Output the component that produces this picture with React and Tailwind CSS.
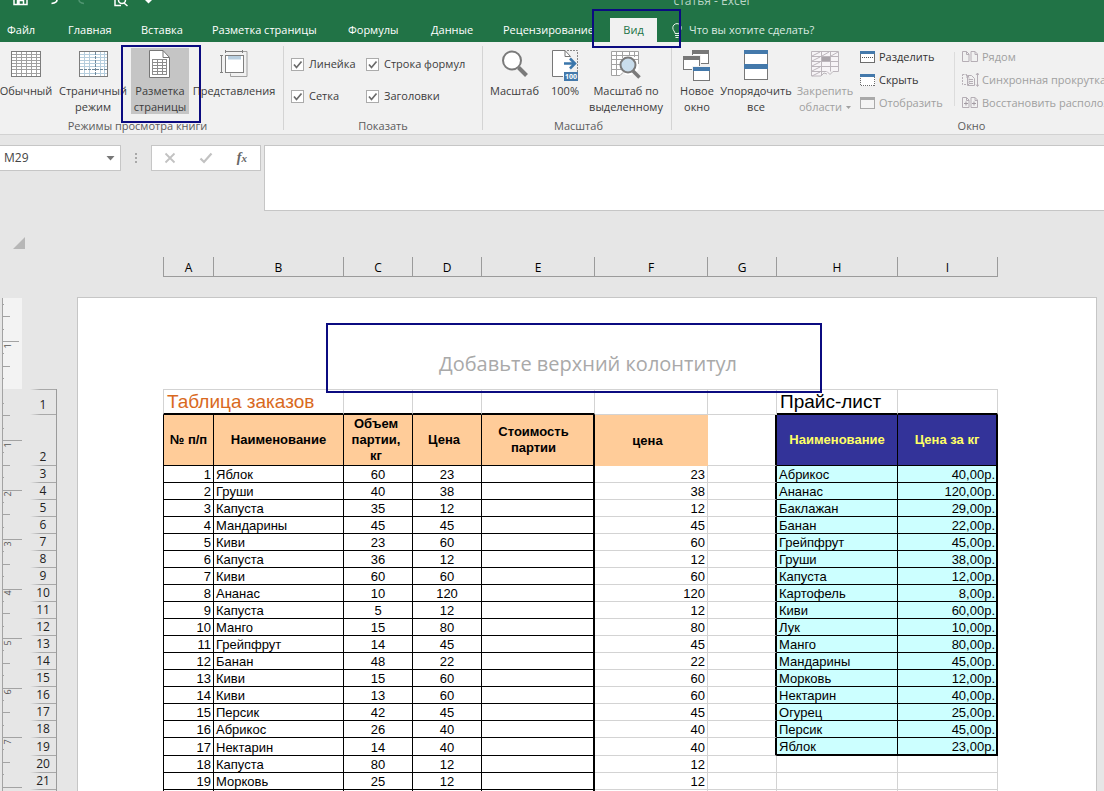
import React from "react";

const ORDERS = [
  ["Яблок", 60, 23], ["Груши", 40, 38], ["Капуста", 35, 12], ["Мандарины", 45, 45],
  ["Киви", 23, 60], ["Капуста", 36, 12], ["Киви", 60, 60], ["Ананас", 10, 120],
  ["Капуста", 5, 12], ["Манго", 15, 80], ["Грейпфрут", 14, 45], ["Банан", 48, 22],
  ["Киви", 15, 60], ["Киви", 13, 60], ["Персик", 42, 45], ["Абрикос", 26, 40],
  ["Нектарин", 14, 40], ["Капуста", 80, 12], ["Морковь", 25, 12],
];

const PRICES = [
  ["Абрикос", "40,00р."], ["Ананас", "120,00р."], ["Баклажан", "29,00р."], ["Банан", "22,00р."],
  ["Грейпфрут", "45,00р."], ["Груши", "38,00р."], ["Капуста", "12,00р."], ["Картофель", "8,00р."],
  ["Киви", "60,00р."], ["Лук", "10,00р."], ["Манго", "80,00р."], ["Мандарины", "45,00р."],
  ["Морковь", "12,00р."], ["Нектарин", "40,00р."], ["Огурец", "25,00р."], ["Персик", "45,00р."],
  ["Яблок", "23,00р."],
];

const COLUMNS = [
  ["A", "w-[51px]"], ["B", "w-[130px]"], ["C", "w-[69px]"], ["D", "w-[69px]"], ["E", "w-[113px]"],
  ["F", "w-[113px]"], ["G", "w-[69px]"], ["H", "w-[121px]"], ["I", "w-[100px]"],
];

const range = (n) => Array.from({ length: n }, (_, i) => i);

/* ---------- icons ---------- */

function NormalIcon() {
  return (
    <svg width="30" height="26" viewBox="0 0 30 26" fill="none" shapeRendering="crispEdges">
      <rect x="0.5" y="0.5" width="29" height="25" fill="#fff" />
      <path stroke="#a0a0a0" d="M5.5 1v24M10.500 1v24M15.500 1v24M20.500 1v24M25.500 1v24M1 3.500h28M1 6.500h28M1 9.500h28M1 12.500h28M1 15.500h28M1 18.500h28M1 22.500h28" />
      <rect x="0.500" y="0.500" width="29" height="25" stroke="#7d7d7d" />
    </svg>
  );
}

function PageBreakIcon() {
  return (
    <svg width="29" height="26" viewBox="0 0 29 26" fill="none" shapeRendering="crispEdges">
      <rect x="0.5" y="0.5" width="28" height="25" fill="#fff" />
      <path stroke="#b5cddd" d="M5.500 1v24M10.500 1v24M21.500 1v24M25.500 1v24M1 3.500h27M1 6.500h27M1 9.500h27M1 12.500h27M1 15.500h27M1 22.500h27" />
      <path stroke="#6f8799" strokeDasharray="3 1" d="M16.500 1v24M1 18.500h27" />
      <rect x="0.500" y="0.500" width="28" height="25" stroke="#7d7d7d" />
    </svg>
  );
}

function PageLayoutIcon() {
  return (
    <svg width="22" height="28" viewBox="0 0 22 28" fill="none">
      <path d="M.5.5H14L20.500 7.500V27.500H.5z" fill="#fff" stroke="#777" />
      <path d="M14 .5V7.500H20.500" stroke="#777" />
      <g shapeRendering="crispEdges" stroke="#8c8c8c">
        <rect x="3.500" y="9.500" width="14" height="15" />
        <path d="M8.500 9v15M13.500 9v15M3 12.500h15M3 15.500h15M3 18.500h15M3 21.500h15" />
      </g>
    </svg>
  );
}

function CustomViewsIcon() {
  return (
    <svg width="28" height="28" viewBox="0 0 28 28" fill="none" stroke="#808080">
      <path d="M10.500 23.500v3h16.500v-25h-4" stroke="#a0a0a0" />
      <rect x="5.500" y="5.500" width="18" height="17" fill="#fff" />
      <path d="M8 6h13v3.500H8z" fill="#b9cfe0" stroke="none" />
      <path d="M5 1.500h18M5.500 0v3M22.500 0v3M1.500 5v17M0 5.500h3M0 22.500h3" />
    </svg>
  );
}

function ZoomIcon() {
  return (
    <svg width="28" height="28" viewBox="0 0 28 28" fill="none">
      <path d="M17.500 17.500L25.500 25.500" stroke="#7a7a7a" strokeWidth="4" />
      <circle cx="11" cy="10.500" r="9" fill="#fff" stroke="#7a7a7a" strokeWidth="2" />
    </svg>
  );
}

function Zoom100Icon() {
  return (
    <svg width="28" height="31" viewBox="0 0 28 31" fill="none">
      <path d="M1.500 .5H14L18.500 5.500V26.500H1.500z" fill="#fff" />
      <path d="M12 26.500H1.500V.5H14L19.500 6.500M14 .5V6.500H19.500" stroke="#777" />
      <path d="M16 .5H26.500V22" stroke="#888" strokeDasharray="2 1" />
      <path d="M13 13.500h11M19 8.500l5 5l-5 5" stroke="#3a76ab" strokeWidth="2.500" />
      <rect x="13" y="22" width="14" height="9" fill="#4479ab" />
      <text x="20" y="29" fill="#fff" fontSize="7" fontWeight="700" textAnchor="middle" fontFamily="Open Sans, sans-serif">100</text>
    </svg>
  );
}

function ZoomSelectionIcon() {
  return (
    <svg width="30" height="29" viewBox="0 0 30 29" fill="none">
      <path d="M.5 1.500H27.500V20L20 25H15L12 22L9 25.500H.5z" fill="#fff" />
      <path d="M27.500 14V1.500H.5V25.500H9l3-3M.5 5.500h27M.5 9.500h27M.5 14.500h10M.5 19.500h10M5.500 1.500v24M11.500 1.500V8M18.500 1.500V6M23.500 1.500V7" stroke="#a2a2a2" />
      <path d="M22 21l6.500 6.500" stroke="#7a7a7a" strokeWidth="3.500" />
      <circle cx="17" cy="15" r="7.500" fill="#c9ddec" stroke="#7a7a7a" strokeWidth="2" />
    </svg>
  );
}

function NewWindowIcon() {
  return (
    <svg width="28" height="32" viewBox="0 0 28 32" fill="none" shapeRendering="crispEdges">
      <path d="M9.500 .5h16v13h-16z" fill="#fff" stroke="#777" />
      <path d="M9 0h17v4H9z" fill="#777" />
      <path d="M0 5h18v16H0z" fill="#f1f1f1" />
      <path d="M.5 6.500h16v13H.5z" fill="#fff" stroke="#777" />
      <path d="M0 6h17v4H0z" fill="#777" />
      <path d="M9 16h19v16H9z" fill="#f1f1f1" />
      <path d="M10.500 17.500h16v13h-16z" fill="#fff" stroke="#777" />
      <path d="M10 17h17v4H10z" fill="#4479ab" />
    </svg>
  );
}

function ArrangeIcon() {
  return (
    <svg width="24" height="30" viewBox="0 0 24 30" fill="none" shapeRendering="crispEdges">
      <path d="M.5 .5h23v29H.5z" fill="#fff" stroke="#777" />
      <path d="M0 0h24v4H0zM0 14h24v5H0z" fill="#4479ab" />
    </svg>
  );
}

function FreezeIcon() {
  return (
    <svg width="29" height="26" viewBox="0 0 29 26" fill="none" stroke="#bcb6bc">
      <path d="M.5 .5H27.500V20L20 20L17 24L12 20L9 25H.5z" fill="#f7f4f7" stroke="none" />
      <path d="M10 25H.5V.5H27.500V20.500H22l-3 3-3-3M10 25l3-3 3 1M.5 5.500h27M.5 10.500h27M.5 15.500h27M.5 20.500h15M10.500 .5v24M19.500 .5v20M1 5l8-4M11 5l7-4M20 5l7-4M1 10l8-4M1 15l8-4M1 20l8-4M1 25l8-4" />
      <path d="M11 6h8v4h-8z" fill="#aaa4aa" stroke="none" />
    </svg>
  );
}

function WindowIcon({ kind }) {
  const bar = kind === "show" ? "#a9a9a9" : "#4479ab";
  const edge = kind === "show" ? "#a9a9a9" : "#6d6d6d";
  return (
    <svg width="16" height="14" viewBox="0 0 16 14" fill="none" shapeRendering="crispEdges">
      <path d="M.5 1.500h14v11H.5z" fill={kind === "show" ? "#f4f4f4" : "#fff"} stroke={edge} strokeDasharray={kind === "hide" ? "1 1" : undefined} />
      <path d="M0 1h15v3H0z" fill={bar} />
      {kind === "split" && <path d="M2 7.500h12" stroke="#555" strokeDasharray="1 1" />}
    </svg>
  );
}

function PairIcon({ kind }) {
  return (
    <svg width="17" height="14" viewBox="0 0 17 14" fill="none" stroke="#b5aeb5">
      <path d="M.5 1.500h4l2.500 2.500v7.500H.5zM4.500 1.500V4.500H7" strokeDasharray={kind === "sync" ? "2 1" : undefined} />
      {kind === "sync" ? (
        <path d="M5.500 2.500h4l3 3v7h-7zM7 6.500h4M7 8.500h4M7 10.500h4M15.500 0v13M14 2l1.500-2L17 2M14 11.500l1.500 2 1.500-2" />
      ) : (
        <path d="M9 1.500h4l2.500 2.500v7.500H9zM13 1.500V4.500h2.500" />
      )}
      {kind === "reset" && <path d="M2 7.500h4M4 5.500v4M10 7.500h4M12 5.500v4" stroke="#a39ba3" />}
    </svg>
  );
}

/* ---------- ribbon ---------- */

function Callout({ className }) {
  return <span aria-hidden="true" className={`pointer-events-none absolute z-10 border-2 border-[#0b0b80] ${className}`} />;
}

function BigButton({ icon, lines, width, active, disabled, dropdown, children }) {
  return (
    <button
      disabled={disabled}
      className={`relative flex h-[66px] shrink-0 flex-col items-center whitespace-nowrap leading-4 ${width} ${active ? "bg-[#c5c5c5]" : ""} ${disabled ? "text-[#a0a0a0]" : "text-[#3c3c3c]"}`}
    >
      <span className="flex h-[35px] shrink-0 items-start pt-[2px]">{icon}</span>
      {lines.map((line, i) => (
        <span key={line} className="flex items-center gap-1">
          {line}
          {dropdown && i === lines.length - 1 && (
            <svg width="5" height="3" viewBox="0 0 5 3"><path d="M0 0h5L2.500 3z" fill="#a0a0a0" /></svg>
          )}
        </span>
      ))}
      {children}
    </button>
  );
}

function Group({ title, className, titleClass = "", children }) {
  return (
    <section className={`relative flex shrink-0 flex-col pt-[6px] ${className}`}>
      <div className="flex h-[70px]">{children}</div>
      <h2 className={`text-center leading-4 text-[#5c5c5c] ${titleClass}`}>{title}</h2>
    </section>
  );
}

function Divider() {
  return <div className="my-1 w-px shrink-0 bg-[#d4d4d4]" />;
}

function Check({ label }) {
  return (
    <label className="flex items-center gap-[5px] whitespace-nowrap leading-4 text-[#3c3c3c]">
      <span className="relative h-[13px] w-[13px] shrink-0">
        <input type="checkbox" defaultChecked className="peer block h-[13px] w-[13px] appearance-none border border-[#ababab] bg-white" />
        <svg className="pointer-events-none absolute inset-0 hidden peer-checked:block" width="13" height="13" viewBox="0 0 13 13" fill="none">
          <path d="M3 6.500l2.500 3L10.500 3.500" stroke="#6b6b6b" strokeWidth="1.700" />
        </svg>
      </span>
      {label}
    </label>
  );
}

function SmallButton({ icon, label, disabled }) {
  return (
    <button disabled={disabled} className={`flex h-[18px] items-center gap-[3px] whitespace-nowrap ${disabled ? "text-[#a0a0a0]" : "text-[#333]"}`}>
      {icon}
      {label}
    </button>
  );
}

function TitleBar() {
  return (
    <div className="relative flex h-[18px] items-start pl-[13px]">
      <button aria-label="Сохранить" className="w-9">
        <svg width="15" height="6" viewBox="0 0 15 6" fill="none"><path d="M1 0v4.500h13V0M4.500 4V.5h6V4M6 1v3" stroke="#fff" strokeWidth="1.500" /></svg>
      </button>
      <button aria-label="Отменить" className="w-[29px]">
        <svg width="10" height="6" viewBox="0 0 10 6" fill="none"><path d="M8 0c0 1.500-1.500 3-5.500 3.500" stroke="#fff" strokeWidth="1.700" /></svg>
      </button>
      <button aria-label="Вернуть" className="w-9">
        <svg width="10" height="6" viewBox="0 0 10 6" fill="none"><path d="M1 0c0 1.500 1.500 3 5 3.500" stroke="#4f9470" strokeWidth="1.500" /></svg>
      </button>
      <button aria-label="Просмотр" className="w-[31px]">
        <svg width="15" height="7" viewBox="0 0 15 7" fill="none" stroke="#fff"><path d="M1 0v5.500h6M10 3l3.500 3" strokeWidth="1.500" /><path d="M4.500 0a3.500 3.500 0 0 0 7 0" strokeWidth="1.500" /></svg>
      </button>
      <button aria-label="Настройка панели">
        <svg width="8" height="5" viewBox="0 0 8 5"><path d="M0 0h7L3.500 3.500z" fill="#fff" /></svg>
      </button>
      <p className="absolute -top-[7px] left-[61%] text-xs leading-4 text-[#b9d5c5]">статья - Excel</p>
    </div>
  );
}

const TABS = [
  ["Файл", "w-[54px] pl-[7px]"], ["Главная", "w-[73px]"], ["Вставка", "w-[71px]"],
  ["Разметка страницы", "w-[136px]"], ["Формулы", "w-[83px]"], ["Данные", "w-[72px]"],
  ["Рецензирование", "w-[121px]"],
];

function Tabs() {
  return (
    <nav className="flex h-6 items-stretch whitespace-nowrap text-white">
      {TABS.map(([label, cls]) => (
        <button key={label} className={`shrink-0 pt-px text-left ${cls} ${label === "Файл" ? "" : "pl-[14px]"}`}>{label}</button>
      ))}
      <button className="relative w-[47px] shrink-0 bg-[#f1f1f1] pt-px text-[#217346]">
        Вид
        <Callout className="-left-[18px] -top-[9px] h-[39px] w-[89px]" />
      </button>
      <button className="flex items-center gap-[7px] pl-[15px] pt-px text-[#dcebe2]">
        <svg width="10" height="16" viewBox="0 0 10 16" fill="none" stroke="#e8f2ec"><path d="M3 10.500C3 8.500.8 7.500.8 4.800a4.200 4.200 0 0 1 8.400 0C9.200 7.500 7 8.500 7 10.500zM3 12.500h4M3.500 14.500h3" /></svg>
        Что вы хотите сделать?
      </button>
    </nav>
  );
}

function Ribbon() {
  return (
    <div className="flex h-[93px] items-stretch border-b border-[#d2d2d2] bg-[#f1f1f1]">
      <Group title="Режимы просмотра книги" className="w-[283px]" titleClass="pr-2">
        <BigButton width="w-[52px]" icon={<span className="pt-[1px]"><NormalIcon /></span>} lines={["Обычный"]} />
        <BigButton width="ml-[3px] w-[76px]" icon={<span className="pt-[1px]"><PageBreakIcon /></span>} lines={["Страничный", "режим"]} />
        <BigButton width="w-[58px]" active icon={<PageLayoutIcon />} lines={["Разметка", "страницы"]}>
          <Callout className="-left-[10px] -top-[3px] h-[78px] w-20" />
        </BigButton>
        <BigButton width="w-[90px]" icon={<CustomViewsIcon />} lines={["Представления"]} />
      </Group>
      <Divider />
      <Group title="Показать" className="w-[198px]">
        <div className="grid grid-cols-[75px_1fr] grid-rows-[32px_32px] items-center pl-[7px]">
          <Check label="Линейка" />
          <Check label="Строка формул" />
          <Check label="Сетка" />
          <Check label="Заголовки" />
        </div>
      </Group>
      <Divider />
      <Group title="Масштаб" className="w-[188px] pl-[3px]">
        <BigButton width="w-[57px]" icon={<ZoomIcon />} lines={["Масштаб"]} />
        <BigButton width="w-[44px]" icon={<Zoom100Icon />} lines={["100%"]} />
        <BigButton width="w-[78px]" icon={<ZoomSelectionIcon />} lines={["Масштаб по", "выделенному"]} />
      </Group>
      <Divider />
      <Group title="Окно" className="w-[597px] pl-[2px]">
        <BigButton width="w-[46px]" icon={<NewWindowIcon />} lines={["Новое", "окно"]} />
        <BigButton width="w-[72px]" icon={<ArrangeIcon />} lines={["Упорядочить", "все"]} />
        <BigButton width="w-[66px]" disabled dropdown icon={<span className="pt-[1px]"><FreezeIcon /></span>} lines={["Закрепить", "области"]} />
        <div className="flex w-[96px] flex-col gap-[5px] pl-[2px]">
          <SmallButton icon={<WindowIcon kind="split" />} label="Разделить" />
          <SmallButton icon={<WindowIcon kind="hide" />} label="Скрыть" />
          <SmallButton disabled icon={<WindowIcon kind="show" />} label="Отобразить" />
        </div>
        <div className="mb-3 mt-1 w-px bg-[#dcdcdc]" />
        <div className="flex flex-col gap-[5px] pl-[7px]">
          <SmallButton disabled icon={<PairIcon kind="side" />} label="Рядом" />
          <SmallButton disabled icon={<PairIcon kind="sync" />} label="Синхронная прокрутка" />
          <SmallButton disabled icon={<PairIcon kind="reset" />} label="Восстановить расположение окна" />
        </div>
      </Group>
    </div>
  );
}

function FormulaBar() {
  return (
    <div className="flex items-start pt-[10px]">
      <div className="flex h-[26px] w-[121px] items-center border border-l-0 border-[#c6c6c6] bg-white">
        <input aria-label="Имя ячейки" defaultValue="M29" className="w-[106px] bg-transparent pl-1 text-[#444] outline-none" />
        <button aria-label="Список имён">
          <svg width="9" height="5" viewBox="0 0 9 5"><path d="M.5 0h8L4.500 4.500z" fill="#777" /></svg>
        </button>
      </div>
      <svg className="mx-[13px] mt-[7px] shrink-0" width="4" height="12" viewBox="0 0 4 12" fill="#a8a8a8"><path d="M1 1h2v2H1zM1 5h2v2H1zM1 9h2v2H1z" /></svg>
      <div className="flex h-[26px] w-[110px] shrink-0 items-center justify-between border border-[#c6c6c6] bg-white px-3">
        <button aria-label="Отмена">
          <svg width="12" height="12" viewBox="0 0 12 12"><path d="M1.500 1.500l9 9M10.500 1.500l-9 9" stroke="#c2c2c2" strokeWidth="1.800" /></svg>
        </button>
        <button aria-label="Ввод">
          <svg width="14" height="12" viewBox="0 0 14 12" fill="none"><path d="M1.500 6.500l3.500 3.500 7.500-8.500" stroke="#c2c2c2" strokeWidth="2.200" /></svg>
        </button>
        <button aria-label="Вставить функцию" className="flex items-baseline pr-px font-['Liberation_Serif',serif] text-sm font-bold italic leading-4 text-[#666]">
          f<span className="text-[11px]">x</span>
        </button>
      </div>
      <textarea aria-label="Строка формул" className="ml-[3px] block h-[66px] min-w-0 flex-1 resize-none border border-r-0 border-[#c6c6c6] bg-white outline-none" />
    </div>
  );
}

/* ---------- worksheet ---------- */

function ColumnHeaders() {
  return (
    <div className="relative flex h-[66px] items-end pl-[163px]">
      <button aria-label="Выделить всё" className="absolute left-[13px] top-[26px]">
        <svg width="12" height="12" viewBox="0 0 12 12"><path d="M12 0v12H0z" fill="#b7b7b7" /></svg>
      </button>
      {COLUMNS.map(([name, width], i) => (
        <div key={name} className={`h-5 shrink-0 border-b border-r border-[#9b9b9b] text-center leading-[21px] text-black ${width} ${i === 0 ? "border-l" : ""}`}>
          {name}
        </div>
      ))}
    </div>
  );
}

function Ruler() {
  const step = 49.5;
  const tick = (y, len) => <path key={`${y}-${len}`} d={`M2 ${Math.round(y) + 0.5}h${len}`} />;
  const marks = [];
  for (let q = -7; q <= 32; q++) {
    if (q === 0) continue;
    const y = 93.500 + (q * step) / 4;
    marks.push(tick(y, q % 4 === 0 ? (q < 0 ? 17 : 20) : q % 2 === 0 ? 8 : 2));
  }
  return (
    <svg className="shrink-0" width="22" height="504" viewBox="0 0 22 504" fill="none">
      <path d="M3 1h19v91H3z" fill="#f3f3f3" />
      <g stroke="#a3a3a3" shapeRendering="crispEdges">
        <path d="M2.500 1v503" />
        {marks}
      </g>
      <g fill="#555" fontSize="9" fontFamily="Open Sans, sans-serif" textAnchor="middle">
        {[-1, 1, 2, 3, 4, 5, 6, 7].map((n) => (
          <text key={n} transform={`translate(11 ${Math.round(98 + n * step)}) rotate(-90)`}>{Math.abs(n)}</text>
        ))}
      </g>
    </svg>
  );
}

function RowHeaders() {
  return (
    <div className="mt-[92px] w-[27px] shrink-0 border-r border-[#9b9b9b]">
      {range(22).map((i) => (
        <div key={i} className={`flex flex-col justify-end text-center text-[#222] ${i === 0 ? "h-[26px]" : i === 1 ? "h-[51px]" : i === 18 ? "h-[18px]" : "h-[17px]"}`}>
          {i === 0 && <div className="mb-auto h-px bg-linear-to-r from-transparent to-[#a8a8a8] to-40%" />}
          <span className={i === 0 ? "pb-px leading-4" : "leading-4"}>{i + 1}</span>
          <div className="h-px bg-linear-to-r from-transparent to-[#a8a8a8] to-40%" />
        </div>
      ))}
    </div>
  );
}

const GRAY = "border-[#d3d3d3]";

function Sheet() {
  return (
    <table className="w-[835px] table-fixed border-separate border-spacing-0 font-['Liberation_Sans',Arial,sans-serif] text-[13px] leading-4 text-black">
      <colgroup>{COLUMNS.map(([name, width]) => <col key={name} className={width} />)}</colgroup>
      <thead>
        <tr className="h-[26px] text-[19px] leading-[22px]">
          <td colSpan={2} className="whitespace-nowrap border-y border-b-2 border-l border-r border-b-black border-l-[#d3d3d3] border-r-[#d3d3d3] border-t-[#d3d3d3] p-0 pl-[3px] text-[#d9691e]">Таблица заказов</td>
          {["C", "D", "E"].map((c) => <td key={c} className="border-b-2 border-r border-t border-b-black border-r-[#d3d3d3] border-t-[#d3d3d3] p-0" />)}
          <td className={`border-b border-r border-t p-0 ${GRAY}`} />
          <td className={`border-b border-r border-t p-0 ${GRAY}`} />
          <td className="whitespace-nowrap border-b-2 border-r border-t border-b-black border-r-[#d3d3d3] border-t-[#d3d3d3] p-0 pl-[3px]">Прайс-лист</td>
          <td className="border-b-2 border-r border-t border-b-black border-r-[#d3d3d3] border-t-[#d3d3d3] p-0" />
        </tr>
        <tr className="h-[51px]">
          <th className="border-b border-l border-r border-black bg-[#ffcc99] p-0">№ п/п</th>
          <th className="border-b border-r border-black bg-[#ffcc99] p-0">Наименование</th>
          <th className="border-b border-r border-black bg-[#ffcc99] p-0 pr-1">Объем<br />партии,<br />кг</th>
          <th className="border-b border-r border-black bg-[#ffcc99] p-0 pr-[6px]">Цена</th>
          <th className="border-b border-r-2 border-black bg-[#ffcc99] p-0 pr-2">Стоимость<br />партии</th>
          <th className="bg-[#ffcc99] p-0 pr-2">цена</th>
          <th className="border-b border-r-2 border-b-[#d3d3d3] border-r-black p-0" />
          <th className="border-b border-r border-black bg-[#333399] p-0 text-[#ffff66]">Наименование</th>
          <th className="border-b border-r-2 border-black bg-[#333399] p-0 text-[#ffff66]">Цена за кг</th>
        </tr>
      </thead>
      <tbody className="leading-[15px]">
        {range(20).map((i) => {
          const [name, qty, price] = ORDERS[i] ?? ["", "", ""];
          const item = PRICES[i];
          const last = i === 16;
          const cell = "border-b border-r border-black p-0 pt-px";
          const list = `${last ? "border-b-2" : "border-b"} border-black bg-[#ccffff] p-0 pt-px`;
          return (
            <tr key={i} className={last ? "h-[18px]" : "h-[17px]"}>
              <td className={`${cell} border-l pr-[2px] text-right`}>{name ? i + 1 : ""}</td>
              <td className={`${cell} pl-[2px]`}>{name}</td>
              <td className={`${cell} text-center`}>{qty}</td>
              <td className={`${cell} text-center`}>{price}</td>
              <td className="border-b border-r-2 border-black p-0" />
              <td className={`border-b border-r p-0 pr-[2px] pt-px text-right ${GRAY}`}>{price}</td>
              <td className={`border-b border-b-[#d3d3d3] p-0 ${item ? "border-r-2 border-r-black" : "border-r border-r-[#d3d3d3]"}`} />
              {item ? (
                <>
                  <td className={`${list} border-r pl-[2px]`}>{item[0]}</td>
                  <td className={`${list} border-r-2 pr-px text-right`}>{item[1]}</td>
                </>
              ) : (
                <>
                  <td className={`border-b border-r p-0 ${GRAY}`} />
                  <td className={`border-b border-r p-0 ${GRAY}`} />
                </>
              )}
            </tr>
          );
        })}
      </tbody>
    </table>
  );
}

export default function App() {
  return (
    <div className="flex h-screen flex-col overflow-hidden bg-[#e6e6e6] font-['Open_Sans','Noto_Sans',sans-serif] text-xs">
      <header className="shrink-0 bg-[#217346] text-[11px]">
        <TitleBar />
        <Tabs />
        <Ribbon />
      </header>
      <FormulaBar />
      <main className="flex min-h-0 flex-1 flex-col overflow-hidden">
        <ColumnHeaders />
        <div className="mt-5 flex min-h-0 flex-1 items-start overflow-hidden">
          <Ruler />
          <div className="w-2 shrink-0" />
          <RowHeaders />
          <section className="relative ml-5 mr-[7px] min-w-0 flex-1 border border-b-0 border-[#c6c6c6] bg-white pl-[85px]">
            <p className="flex h-[91px] w-[850px] items-center justify-center pt-10 text-xl text-[#a9a9a9]">Добавьте верхний колонтитул</p>
            <Callout className="left-[248px] top-[25px] h-[70px] w-[496px]" />
            <Sheet />
          </section>
        </div>
      </main>
    </div>
  );
}
